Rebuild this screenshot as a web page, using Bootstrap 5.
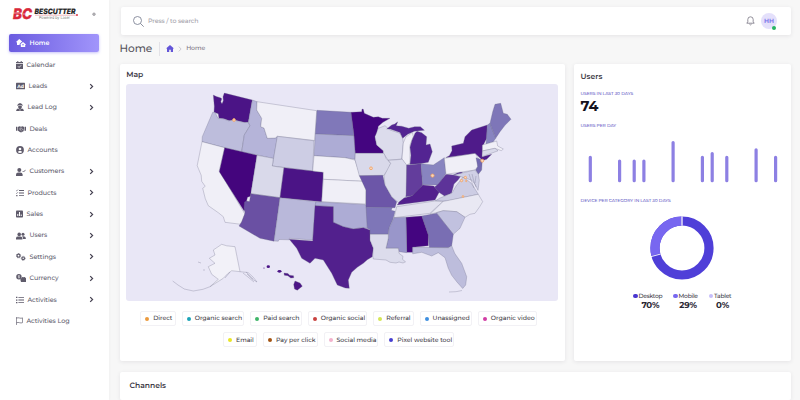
<!DOCTYPE html>
<html lang="en">
<head>
<meta charset="utf-8">
<meta name="viewport" content="width=device-width, initial-scale=1">
<title>Home</title>
<link href="https://cdn.jsdelivr.net/npm/bootstrap@5.3.0/dist/css/bootstrap.min.css" rel="stylesheet">
<style>
html{font-size:16px}
body{font-family:Montserrat,Inter,"Open Sans",sans-serif;text-rendering:geometricPrecision;background:#f7f7f7;width:800px;height:400px;overflow:hidden;font-size:6.4px;line-height:1.3;color:#5e5a6b}
.side{width:109px;height:400px;background:#fff;box-shadow:0 0 3px rgba(0,0,0,.05)}
.brand{height:34px;padding:6px 13px 0}
.menu{padding:0 10.5px 0 9px}
.item{height:18px;margin-bottom:3.37px;padding:.8px 4.5px 0 6.5px;border-radius:2px;color:#62606e;font-weight:500;letter-spacing:-.04px}
.item.on{background:linear-gradient(90deg,#6b5ce0,#a195fb);color:#fff;font-weight:600;box-shadow:0 1px 3px #7367f066;letter-spacing:0}
.item>svg:first-child{height:8px;fill:#5f5b6b;margin-right:4px;flex:none}
.item.on>svg:first-child{fill:#fff}
.chev{width:5px;height:7px;fill:none;stroke:#444050;stroke-width:1.2}
.main{padding:7px 9px 0 10.5px;width:691px}
.panel{background:#fff;border-radius:2px;box-shadow:0 1px 4px rgba(40,35,60,.09)}
.topbar{height:28px;width:670px;margin-left:1.5px;padding:0 14px 0 12px}
.hint{color:#a3a1aa;font-size:6.3px;font-weight:500;letter-spacing:-.08px}
.avatar{width:16px;height:16px;background:#e4e0fb;color:#7267e8;font-size:6.2px;font-weight:600;position:relative}
.avatar i{position:absolute;right:1px;bottom:-1px;width:4px;height:4px;border-radius:50%;background:#28b463}
.crumbs{height:29px;padding-bottom:2px}
.crumbs h1{font-size:10.6px;font-weight:500;margin:0;color:#56535c;padding-right:7px;border-right:1px solid #e3e2e7;line-height:14px;letter-spacing:-.1px}
.crumbs span{letter-spacing:-.05px;font-size:6.2px;font-weight:500;color:#77747f}
.mapcard{width:445px;height:297px;padding:6px 7px 0 6.7px}
.usercard{width:217px;height:297px;padding:8px 7px 8px 6.5px}
.ttl{font-size:7.6px;font-weight:600;color:#3d3a46;line-height:10px}
.map{display:block;width:432px;height:217px;background:#e9e7f6;border-radius:3px;margin:3.5px 0 10.5px -.2px}
.map path{stroke:#6b6985;stroke-width:.3;stroke-linejoin:round}
.legend{gap:6.2px 6px;margin:0 14px 0 8px}
.chip{height:15px;border:1px solid #f2f1f5;border-radius:2px;padding:0 0 0 4px;color:#3a3742;font-size:6.2px;font-weight:500;white-space:nowrap}
.chip b{width:4px;height:4px;flex:none;border-radius:50%;margin-right:3.8px}
.cap{font-size:4.4px;color:#6156c4;line-height:6px;letter-spacing:-.04px;font-weight:500;white-space:nowrap}
.big{font-size:14.4px;font-weight:700;color:#15121d;line-height:16px}
.donutkey{gap:11px;font-size:6px;font-weight:500;color:#3c3946;letter-spacing:-.25px;line-height:8px}
.donutkey strong{display:block;font-size:8.6px;font-weight:700;color:#2b2834;letter-spacing:-.2px;line-height:12px;padding:0 0 0 5px}
.donutkey i{display:inline-block;width:4.2px;height:4.2px;border-radius:50%;margin-right:1px}
.chan{height:28px;width:671.6px;margin-top:10.5px;padding:9.5px 10px 0}
</style>
<script src="https://cdn.jsdelivr.net/npm/bootstrap@5.3.0/dist/js/bootstrap.bundle.min.js"></script>
</head>
<body>
<div class="d-flex">
<aside class="side flex-shrink-0">
  <div class="brand d-flex justify-content-between">
    <svg class="overflow-visible" width="67" height="16" viewBox="0 0 67 16" font-family="Inter,sans-serif">
      <text x="0" y="13" font-size="14.5" font-weight="800" font-style="italic" fill="#d9283a" stroke="#d9283a" stroke-width=".4" textLength="19" lengthAdjust="spacingAndGlyphs">BC</text>
      <path d="M0 7h8M10 8h8" stroke="#fff" stroke-width=".5"/>
      <text x="21.5" y="8" font-size="7.4" font-weight="800" font-style="italic" fill="#222" stroke="#222" stroke-width=".15" textLength="41" lengthAdjust="spacingAndGlyphs">BESCUTTER</text>
      <path d="M22 9.2h42" stroke="#d34a55" stroke-width=".4"/><circle cx="64" cy="9" r=".9" fill="#d9283a"/>
      <text x="26" y="13.4" font-size="4.2" fill="#777" textLength="31" lengthAdjust="spacingAndGlyphs">Powered by Laser</text>
    </svg>
    <svg width="4" height="16" viewBox="0 0 4 16"><circle cx="2" cy="8.2" r="1.3" fill="#bbb" stroke="#8d8a94" stroke-width=".6"/></svg>
  </div>
  <nav class="menu d-flex flex-column">
    <div class="item on d-flex align-items-center"><svg width="10" viewBox="0 0 10 8"><path d="M0 3 3.2 0l3 2.6L5 3.6 3.6 5v1H1V3.5zM4.3 5.3 7 3l3 2.6-.8.3V8H4.8V5.7z"/><circle cx="7" cy="5.8" r=".8" fill="#8175ec"/></svg>Home</div>
    <div class="item d-flex align-items-center"><svg width="7" viewBox="0 0 7 8"><path d="M0 1h1.3V0h1v1h2.4V0h1v1H7v1.3H0zM0 2.9h7V8H0z"/><path d="m2 5.3 1.1 1.1 2-2.1" fill="none" stroke="#fff" stroke-width=".8"/></svg>Calendar</div>
    <div class="item d-flex align-items-center"><svg width="9" viewBox="0 0 9 8"><rect y=".8" width="9" height="6.5" rx=".6"/><text x="1.3" y="5.8" font-size="4.7" font-weight="700" fill="#fff" letter-spacing="0">Ad</text></svg>Leads<svg class="chev ms-auto" viewBox="0 0 5 7"><path d="m1.2 1.1 2.4 2.4-2.4 2.4"/></svg></div>
    <div class="item d-flex align-items-center"><svg width="8" viewBox="0 0 8 8"><path d="M2 1 4 0l2 1v.8h1v.7H1v-.7h1zM2.2 3h3.6v1.6L4.9 5.8H7L8 8H0l1-2.2h2.1L2.2 4.6z"/><path d="M4 5.8V8" stroke="#fff" stroke-width=".5"/></svg>Lead Log<svg class="chev ms-auto" viewBox="0 0 5 7"><path d="m1.2 1.1 2.4 2.4-2.4 2.4"/></svg></div>
    <div class="item d-flex align-items-center"><svg width="10" viewBox="0 0 10 8"><path d="M0 1.8h1.3v4H0zM8.7 1.8H10v4H8.7zM1.8 2l1.7-.7L5 1.8l1.5-.5 1.7.7v3.7L5.8 7.2H4.2L1.8 5.4z"/><path d="M5 2.4 3.6 4.2l1.1.2 1-.8L8 5.5M4.7 5.2 6 6.5" fill="none" stroke="#fff" stroke-width=".5"/></svg>Deals</div>
    <div class="item d-flex align-items-center"><svg width="8" viewBox="0 0 8 8"><circle cx="4" cy="4" r="3.9"/><circle cx="4" cy="3" r="1.3" fill="#fff"/><path d="M1.7 6.1C2.5 4.6 5.5 4.6 6.3 6.1 5 7.3 3 7.3 1.7 6.1z" fill="#fff"/></svg>Accounts</div>
    <div class="item d-flex align-items-center"><svg width="10" viewBox="0 0 10 8"><circle cx="3.3" cy="2" r="2"/><path d="M0 8V6.5Q.2 4.6 2.2 4.5h2.2Q6.4 4.6 6.6 6.5V8z"/><path d="m6.6 3 1 1 2-2.2" fill="none" stroke="#5f5b6b" stroke-width=".8"/></svg>Customers<svg class="chev ms-auto" viewBox="0 0 5 7"><path d="m1.2 1.1 2.4 2.4-2.4 2.4"/></svg></div>
    <div class="item d-flex align-items-center"><svg width="8" viewBox="0 0 8 8"><path d="M3 1h5v.9H3zM3 3.6h5v.9H3zM3 6.2h5v.9H3zM.2 6h1.3v1.2H.2z"/><path d="m0 1.4.7.6L2 .5M0 4l.7.6L2 3.1" fill="none" stroke="#5f5b6b" stroke-width=".6"/></svg>Products<svg class="chev ms-auto" viewBox="0 0 5 7"><path d="m1.2 1.1 2.4 2.4-2.4 2.4"/></svg></div>
    <div class="item d-flex align-items-center"><svg width="7" viewBox="0 0 7 8"><rect y=".5" width="7" height="7" rx=".8"/><path d="M1.3 4h1v2h-1zM3 2h1v4H3zM4.7 4.4h1V6h-1z" fill="#fff"/></svg>Sales<svg class="chev ms-auto" viewBox="0 0 5 7"><path d="m1.2 1.1 2.4 2.4-2.4 2.4"/></svg></div>
    <div class="item d-flex align-items-center"><svg width="10" viewBox="0 0 10 8"><circle cx="3.2" cy="2.4" r="1.8"/><circle cx="7" cy="2.2" r="1.5"/><path d="M0 7.4V6Q.3 4.6 2 4.6h2.5Q6.2 4.7 6.4 6v1.4zM6 4.3h1.5Q9.6 4.4 9.8 6v1H7Q7.1 5 6 4.3z"/></svg>Users<svg class="chev ms-auto" viewBox="0 0 5 7"><path d="m1.2 1.1 2.4 2.4-2.4 2.4"/></svg></div>
    <div class="item d-flex align-items-center"><svg width="10" viewBox="0 0 10 8"><g fill="none" stroke="#5f5b6b"><circle cx="2.5" cy="2.7" r="1.5" stroke-width="1.2"/><circle cx="2.5" cy="2.7" r="2.2" stroke-width=".7" stroke-dasharray="1 .75"/><circle cx="7.2" cy="5.3" r="1.3" stroke-width="1.1"/><circle cx="7.2" cy="5.3" r="2" stroke-width=".7" stroke-dasharray=".9 .67"/></g></svg>Settings<svg class="chev ms-auto" viewBox="0 0 5 7"><path d="m1.2 1.1 2.4 2.4-2.4 2.4"/></svg></div>
    <div class="item d-flex align-items-center"><svg width="10" viewBox="0 0 10 8"><circle cx="2.9" cy="2.7" r="2.7"/><path d="M4.3 5.4 6.2 3l.9.3L8.7 3 10 4.2V8H5z"/><path d="M3.8 1.7H2.3v1h1.2v1H2M2.9 1v3.4" fill="none" stroke="#fff" stroke-width=".4"/></svg>Currency<svg class="chev ms-auto" viewBox="0 0 5 7"><path d="m1.2 1.1 2.4 2.4-2.4 2.4"/></svg></div>
    <div class="item d-flex align-items-center"><svg width="8" viewBox="0 0 8 8"><path d="M0 .8h1.4v1.3H0zM0 3.4h1.4v1.3H0zM0 6h1.4v1.3H0zM2.4 1H8v.8H2.4zM2.4 3.6H8v.8H2.4zM2.4 6.2H8V7H2.4z"/></svg>Activities<svg class="chev ms-auto" viewBox="0 0 5 7"><path d="m1.2 1.1 2.4 2.4-2.4 2.4"/></svg></div>
    <div class="item d-flex align-items-center"><svg width="7" viewBox="0 0 7 8"><path d="M.4 0v8M.4 1.2Q2 .4 3.5 1T6.6.9v4.7Q5 6.3 3.6 5.7T.4 5.8" fill="none" stroke="#5f5b6b" stroke-width=".7"/></svg>Activities Log</div>
  </nav>
</aside>
<main class="main">
  <div class="panel topbar d-flex align-items-center">
    <svg width="11" height="11" viewBox="0 0 11 11" fill="none" stroke="#7f8495" stroke-width=".9"><circle cx="4.5" cy="4.5" r="4"/><path d="m7.4 7.4 3.3 3.3"/></svg>
    <span class="hint ms-1">Press / to search</span>
    <svg class="ms-auto" width="9" height="10" viewBox="0 0 9 10" fill="none" stroke="#777482" stroke-width=".8"><path d="M.8 7.2h7.4L7.2 5.8V3.5a2.7 2.7 0 0 0-5.4 0v2.3zM3.4 8.1q1.1 1.6 2.2 0"/></svg>
    <div class="avatar rounded-circle d-flex align-items-center justify-content-center" style="margin-left:6px">HH<i></i></div>
  </div>
  <div class="crumbs d-flex align-items-center">
    <h1>Home</h1>
    <svg width="8" height="7" viewBox="0 0 8 7" class="me-1" style="margin-left:6px"><path d="M0 3.6 4 0l4 3.6H7V7H4.8V4.7H3.2V7H1V3.6z" fill="#6355d8"/></svg>
    <svg width="4" height="6" viewBox="0 0 4 6" class="me-1"><path d="m.8.6 2.3 2.4L.8 5.4" fill="none" stroke="#b9b6c3" stroke-width=".7"/></svg>
    <span>Home</span>
  </div>
  <div class="d-flex justify-content-between" style="width:671.6px">
    <section class="panel mapcard">
      <div class="ttl">Map</div>
      <svg class="map" viewBox="126 84 432 217">
        <!-- West -->
        <path fill="#4b1486" d="M213.3 95l3 1.5 4 1.2 1.5 1-1 3 1.2 2 1.3-3-.3-4 1.3-3.6 28 6.9-4 22.3-3.3.2-10.5-2.5-5 .8-5.5-2-5-.5-.8-4.5-4.2-1.5.3-6z"/>
        <path fill="#bdbddc" d="M212.7 112.3l2.5.2 2.8 5.8 5 .5 5.5 2 5-.8 10.5 2.5 4.3-.2 1.7 3.4-5.7 9.3-2.6 16.7-17-4L202 141.7l.3-5z"/>
        <path fill="#b5b4d9" d="M252.3 100l4.7 1.7-.3 8.3 5 8.3-1 8.4 3.3 1.3 3.3 10.3 8-.5 2.3-1-4 21.8-31.9-6.9 2.6-16.7 5.7-9.3-1.7-3.4z"/>
        <path fill="#f0eff7" d="M257 101.7l59.7 9-2 29.8-37.4-4.2-2 1.7-8 .3-3.3-10.3-3.3-1.3 1-8.4-5-8.3z"/>
        <path fill="#cdcde4" d="M277.3 136.3L314 140.8l-1.3 30.2-40.4-5z"/>
        <path fill="#f0eff7" d="M202 141.7l22.7 6-5.4 23 25.7 43.6-4 10-16-2-1.7-5.6-5-4-10-7-3-7-2.6-10.4 2.5-2-3.5-5-.5-6-4-9.6z"/>
        <path fill="#44057d" d="M224.7 147.7l32.3 7.6-6.5 41-3 1-1 4-.5 7.5-2 2-24.7-39z"/>
        <path fill="#d9d9ea" d="M257 155.3l16.3 3-1 7.7 11.7 1.7-4 30-29.2-4z"/>
        <path fill="#4b1486" d="M284 167.7l39.3 4.6-1.6 29.4-41.7-4z"/>
        <path fill="#6a50a3" d="M250.8 193.7l29.2 4-6 43.5-14-2.9-21-12.3 2.7-4.3L245 213l-1-5 .5-6 2-1 3 .5z"/>
        <path fill="#b9b8da" d="M280 197.7l36 4-3.3 38.3-23.4-1.7v1.5l-10.3-.3-.7 1.7-4.3-.2z"/>
        <!-- Plains -->
        <path fill="#8078b9" d="M317 110.3l34 2 3 23.4-38.7-1.7z"/>
        <path fill="#adacd5" d="M315.3 134l38.7 1.7 1.3 17.6-.3 6-10-1.6-31-2z"/>
        <path fill="#f0eff7" d="M314 155.7l31 2 10 2.3 5 15 3 6.3-39.7-2v-7l-10.6-1.3z"/>
        <path fill="#f0eff7" d="M323.3 179.3l39.7 2 3 8.7-.4 14-43.9-2.3z"/>
        <path fill="#adacd5" d="M316 201.7l50 3 1.3 10.3v13.5l-5-1-9 1.5-10-2.3-10-4.4v-15.6l-18.3-1z"/>
        <path fill="#52208d" d="M315 205.7l18.3 1v15.6l10 4.4 10 2.3 10-1.3 6.7 2.3v10l3.3 8.3-1 8.4-5 3-4 3.6-6 4-5.6 5-3.4 7.7 1 8.3-4-.3-8-3-5.6-11.7-8.4-13.3-8.3-1.7-5 5-8.3-5-5-10-7.4-9 23.4 1.7z"/>
        <!-- Midwest -->
        <path fill="#440580" d="M351 112.3l10.7-.6.3-2.7 1.3.3 1 4 9 4 5-.5 4 1.5 7.7 0-7 4-4.7 4-1.3 7.4-2 3 1.7 8.3 6.6 5.7v2.6h-28l-1.3-18z"/>
        <path fill="#dcdcec" d="M378.3 128.3l6.7-2.6 5 4.3 10 3.3 2.7 5 .6 4.7-1.6 16-13.4 1.3-5-7v-2.6l-6.6-5.7-1.7-8.3z"/>
        <path fill="#532492" d="M386.7 129l5-4 3-1 3-2.2-1.5 4 5.5.4 7 2 6-1.5h5.7l4 3.5-10 1-6.7 3-5 4-2.7-5.7-10-3.5z"/>
        <path fill="#f0eff7" d="M403.3 143l2.5-6 6.5-4.5 1 4-3.3 8.5v18.3l-4 2-4-6.3z"/>
        <path fill="#532492" d="M415 133.3l2-2 4.7 1.4 5 4-.7 8.3 4-1 2.3 7.7-4 10.6-8.3 1.4-10 .6 1-9-1-8 2-7z"/>
        <path fill="#d9d9ea" d="M355.3 153.3h28.7l2 5 4.7 5-1.7 6-5.7 6.4h-24l-4.3-16z"/>
        <path fill="#6c56a8" d="M359.3 175.7l23.4-.4 2.3 9.7 6.7 11.7 5 5-1.7 6h-2.7L366 207.3V190z"/>
        <path fill="#dcdcec" d="M388.3 160.3l14-1 4.4 5.7v29l-2 4.5-5.7 4.5-7.3-6.3L385 185l-1-9 6.7-12.7z"/>
        <path fill="#633d9c" d="M406.7 165l14.3-1.3 1.7 21-5 7-5.7 4-6 1z"/>
        <path fill="#8884c0" d="M421 163.7l12.3 1.3 11-7.3 1.7 15.6-7.7 11.7-15.6-.3z"/>
        <path fill="#7e76b8" d="M366 207.3h26.3l-1 3 3.7 1-2 8-4 9-.7 6H370v-4.5l-2.7-1.5z"/>
        <!-- South -->
        <path fill="#52208d" d="M398 204l1-2 5-4 8-2.3 5-4.7 5.7-6 11 1 5.6 6-4.3 8-38 5z"/>
        <path fill="#5d3399" d="M446 174.3l7.3.7 7-3.5 2.7 1.5-5 7-4 4-2.5 9.3-7 2.7-6-4-4-5 3.8-3z"/>
        <path fill="#cdcde4" d="M435 201l5-3 5-2 7-3 4-7 7-9 8 6 4 6 3.3 5.3-31 6.7z"/>
        <path fill="#e3e2ef" d="M396.7 206.7l38-5.7 8.6.5-6 5-7.3 6.8-36 4.4z"/>
        <path fill="#e9e8f3" d="M443 201.5l35.3-7.2 4.4 7.4-3 5-4.7 6.6-5 1-5 3-8.3-5.6-13.4-1-13.3 3.6z"/>
        <path fill="#c1c1df" d="M436.7 212.7l6.6-2 13.4 1 8.3 5.6-5 11-6.7 6-10-12.6z"/>
        <path fill="#796eb3" d="M421.7 216l15-2.7 6.6 8.4 10 12.6-1.6 11.4-3.4 2-19 0-1-12.7z"/>
        <path fill="#440580" d="M406 217.3l15.7-1.3 6.6 19v10.7l-15.6 1.6v5h-6z"/>
        <path fill="#9996ca" d="M394 217.7l12-.4.7 35.4-7.4-1-1-3.4H386l2.3-10 .7-10z"/>
        <path fill="#dcdcec" d="M370 234.3h18.3v4l-2.3 10h12.3l.7 5 4 3-.5 3 3 2.5-2.5 1.2-4-1-3 1-6-.7-4-2.3-12.7-1-.6-3 .6-8-3.3-8z"/>
        <path fill="#bdbddc" d="M412.7 247.3l35.6.4 3.4-2 3 7.6 7 10 5 13.4-1 8.3-3 3.5-6-6.8-5-6.4-3.4-7-3.3-10.6-6.7-5-6.6 3.3-10-3.7-9 1.5z"/>
        <path fill="none" d="M462 290.5l-6 1.2-7 .3"/>
        <!-- Northeast -->
        <path fill="#f0eff7" d="M444.3 158.3L475 153.3l3.3 5-.6 8.4-2.7 3.3-29 4.3z"/>
        <path fill="#4f1b8a" d="M449.3 155.7l2.7-5-.3-4.7 11.6-2.7 1.7-6.6 6.7-6.7 15.6-5-.6 13.3-3.4 6.7-1 11.7 9.4-2.4-5 5-4 1.2-7.7-7.2-29 4.2z"/>
        <path fill="#8884c0" d="M487.3 125l2.7-1.7 5.7 15-2.4 3.4-7.3 2.6z"/>
        <path fill="#7e76b8" d="M490 123.3l2.7-11.6 2.3-7.4 5.7-1 2.6 10 4 1 3.7 5-6 6-5 6.4-4.3 6.6z"/>
        <path fill="#f0eff7" d="M482.3 145l14.4-4 1 5 5.6 3-2 1.7-6.3-2.4-12.7 2.7z"/>
        <path fill="#d9d9ea" d="M482.3 151l12.7-2.7 3 2.5-6 2.2-10 3.7z"/>
        <path fill="#7268b0" d="M476 157.7l6.3 2.3-.6 10-3.4 4.3-2.6-4.3 2-3.5z"/>
        <path fill="#d0d0e6" d="M453.3 175l21.7-5 3.3 4.3 1 6-1.3 10-3-6-3-4-9-3z"/>
        <path fill="none" d="M472 174l2 8 2 5M469 174l2 6 3 8M476 176l-1 7"/>
        <!-- Alaska and Hawaii -->
        <path fill="#f2f1f8" d="M221.7 244.3l5 1.5 8.3.9 5 25-8.3-1-4 3-4.4 4.6-13.3 8.4 8.3-7.4-6.6-5-3.4-7.6 6.7-3.4-5.7-5 5.7-3.3-1.7-5z"/>
        <path fill="none" d="M210 286.7l-7 2.6-9.7 1.7-9-2-6.3-4-5.3-4M240 271.7l8 .8 5 4.5 4 5-5-3-5-5M243 273l5 4 6 5M246 272l7 7M225 278l5-6M198 262l3 1M204 269v2"/>
        <g fill="#4b1486"><ellipse cx="268.3" cy="266.7" rx="1.7" ry="1.4"/><circle cx="264" cy="268" r=".6"/><ellipse cx="279.5" cy="271.3" rx="2" ry="1.4"/><path d="M284 273l4 .6 1.5 1.6 4 .5.3 2-3 .4-3-2.4-3.5-.5zM295 281l5 2 2.3 3.2-5 4-2.8-1.2-.8-4.5z"/></g>
        <g fill="#f9d9bd" stroke="#f3a05f" stroke-width=".8"><circle cx="234" cy="120" r="1.4"/><circle cx="371" cy="168.3" r="1.4"/><circle cx="432.5" cy="175.6" r="1.6"/><circle cx="482.3" cy="160.7" r="1.5"/><circle cx="461.5" cy="180.6" r="1.2"/><circle cx="465.3" cy="177.5" r="1.2"/><circle cx="466.3" cy="181" r=".7"/><circle cx="463" cy="196.5" r=".9"/></g>
      </svg>
      <div class="legend d-flex flex-wrap justify-content-center">
        <div class="chip d-flex align-items-center" style="width:35.5px"><b style="background:#eb9a3e"></b>Direct</div>
        <div class="chip d-flex align-items-center" style="width:62.5px"><b style="background:#1ba3b8"></b>Organic search</div>
        <div class="chip d-flex align-items-center" style="width:51.5px"><b style="background:#3fb568"></b>Paid search</div>
        <div class="chip d-flex align-items-center" style="width:59.5px"><b style="background:#c9413f"></b>Organic social</div>
        <div class="chip d-flex align-items-center" style="width:40.3px"><b style="background:#d5e655"></b>Referral</div>
        <div class="chip d-flex align-items-center" style="width:52.3px"><b style="background:#3f8fe0"></b>Unassigned</div>
        <div class="chip d-flex align-items-center" style="width:59.3px"><b style="background:#d13da5"></b>Organic video</div>
        <div class="chip d-flex align-items-center" style="width:34px"><b style="background:#e9e526"></b>Email</div>
        <div class="chip d-flex align-items-center" style="width:54.5px"><b style="background:#a35414"></b>Pay per click</div>
        <div class="chip d-flex align-items-center" style="width:54.8px"><b style="background:#f3b2cd"></b>Social media</div>
        <div class="chip d-flex align-items-center" style="width:70px"><b style="background:#463fd0"></b>Pixel website tool</div>
      </div>
    </section>
    <section class="panel usercard">
      <div class="ttl">Users</div>
      <div class="cap" style="margin-top:10px">USERS IN LAST 30 DAYS</div>
      <div class="big">74</div>
      <div class="cap" style="margin-top:10px">USERS PER DAY</div>
      <svg width="203" height="54" viewBox="580.4 130 203 54" class="d-block"><path d="M589.7 157.3v23.4M619 161v19.7M633.6 161v19.7M643.3 161v19.7M672.5 142.5v38.2M701.8 157.3v23.4M711.6 153.6v27.1M726.2 157.3v23.4M755.5 149.8v30.9M775 157.3v23.4" stroke="#8d80e3" stroke-width="3.2" stroke-linecap="round"/></svg>
      <div class="cap" style="margin-top:15px">DEVICE PER CATEGORY IN LAST 30 DAYS</div>
      <svg class="d-block mx-auto" style="margin-top:10px" width="66" height="66" viewBox="-33 -33 66 66"><g transform="rotate(-90)" fill="none" stroke-width="9.2"><circle r="27" stroke="#4f3fd8"/><circle r="27" stroke="#7867f0" pathLength="100" stroke-dasharray="29 71" stroke-dashoffset="-71"/></g><path d="M0-22.3V-32" stroke="#d2cdf5" stroke-width="1.7"/><path d="M-21.5 6.1-31 8.6" stroke="#fff" stroke-width=".9"/></svg>
      <div class="donutkey d-flex justify-content-center" style="margin-top:11px">
        <div class="text-center"><i style="background:#4936d0"></i>Desktop<strong>70%</strong></div>
        <div class="text-center"><i style="background:#7867f0"></i>Mobile<strong>29%</strong></div>
        <div class="text-center"><i style="background:#c6bdfa"></i>Tablet<strong>0%</strong></div>
      </div>
    </section>
  </div>
  <section class="panel chan"><div class="ttl">Channels</div></section>
</main>
</div>
</body>
</html>
